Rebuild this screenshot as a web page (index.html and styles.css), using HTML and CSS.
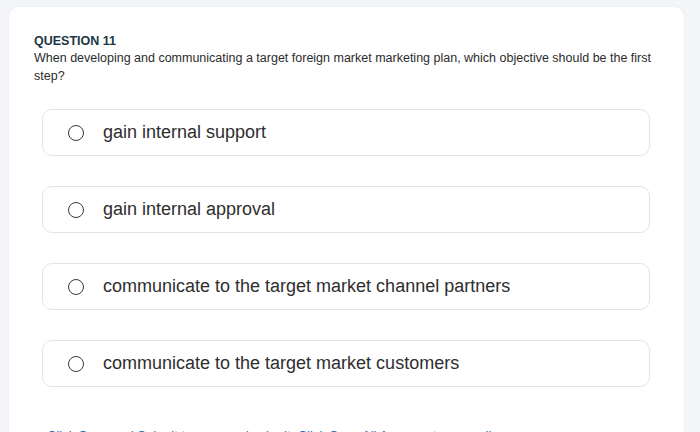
FILE: index.html
```html
<!DOCTYPE html>
<html>
<head>
<meta charset="utf-8">
<link rel="stylesheet" href="styles.css">
</head>
<body>
<div class="card">
  <div class="q-title">QUESTION 11</div>
  <div class="q-text">When developing and communicating a target foreign market marketing plan, which objective should be the first step?</div>
  <div class="options">
    <label class="option"><span class="radio"></span><span class="opt-text">gain internal support</span></label>
    <label class="option"><span class="radio"></span><span class="opt-text">gain internal approval</span></label>
    <label class="option"><span class="radio"></span><span class="opt-text">communicate to the target market channel partners</span></label>
    <label class="option"><span class="radio"></span><span class="opt-text">communicate to the target market customers</span></label>
  </div>
  <div class="save-note">Click Save and Submit to save and submit. Click Save All Answers to save all answers.</div>
</div>
</body>
</html>
```

FILE: styles.css
```css
html, body {
  margin: 0;
  padding: 0;
}
body {
  background: #f4f5f9;
  font-family: "Liberation Sans", Arial, sans-serif;
  padding: 7px 16px 0 9px;
  height: 432px;
  box-sizing: border-box;
  overflow: hidden;
}
.card {
  background: #ffffff;
  border-radius: 10px;
  box-shadow: 0 0 3px rgba(0, 0, 0, 0.05);
  padding: 26px 25px 20px 25px;
  min-height: 500px;
}
.q-title {
  font-size: 12.5px;
  font-weight: bold;
  color: #1c3546;
  line-height: 16px;
}
.q-text {
  font-size: 12.5px;
  color: #2b2b2b;
  line-height: 18px;
}
.options {
  display: flex;
  flex-direction: column;
  gap: 30px;
  margin: 24px 9px 0 8px;
}
.option {
  display: flex;
  align-items: center;
  height: 47px;
  box-sizing: border-box;
  border: 1px solid #e4e4e6;
  border-radius: 10px;
  padding-left: 25px;
  background: #fff;
}
.radio {
  width: 16px;
  height: 16px;
  box-sizing: border-box;
  border: 1.6px solid #3a3a3a;
  border-radius: 50%;
  flex: none;
}
.opt-text {
  margin-left: 19px;
  font-size: 18px;
  color: #2e2e2e;
}
.save-note {
  margin: 41px 0 0 13px;
  font-size: 13px;
  line-height: 16px;
  color: #2a6bb0;
}
```
